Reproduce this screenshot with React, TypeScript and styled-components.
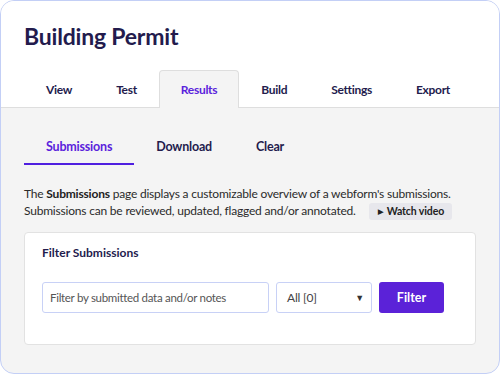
import React from "react";
import styled, { createGlobalStyle } from "styled-components";

const Global = createGlobalStyle`
  html, body { margin: 0; padding: 0; background: #ffffff; }
  body { font-family: "Lato", "Noto Sans", sans-serif; }
  * { box-sizing: border-box; }
`;

const Frame = styled.div`
  width: 500px;
  height: 374px;
  border: 1px solid #c3cff6;
  border-radius: 14px;
  overflow: hidden;
  background: #f4f4f4;
  display: flex;
  flex-direction: column;
`;

const Header = styled.header`
  background: #ffffff;
  padding: 20px 23px 0 23px;
  border-bottom: 1px solid #dedede;
`;

const Title = styled.h1`
  margin: 0;
  font-size: 23px;
  line-height: 30px;
  font-weight: 700;
  color: #231b4d;
  letter-spacing: -0.2px;
`;

const TabList = styled.nav`
  display: flex;
  margin-top: 19px;
`;

const Tab = styled.div<{ $active?: boolean }>`
  height: 38px;
  padding: 0 21px;
  display: flex;
  align-items: center;
  font-size: 12px;
  letter-spacing: -0.3px;
  font-weight: 700;
  color: ${(p) => (p.$active ? "#5a22dc" : "#231b4d")};
  background: ${(p) => (p.$active ? "#f4f4f4" : "transparent")};
  border: 1px solid ${(p) => (p.$active ? "#dedede" : "transparent")};
  border-bottom: none;
  border-radius: 4px 4px 0 0;
  margin-bottom: -1px;
`;

const Body = styled.main`
  padding: 0 23px;
  display: flex;
  flex-direction: column;
`;

const SubTabs = styled.nav`
  display: flex;
  margin-top: 19px;
`;

const SubTab = styled.div<{ $active?: boolean }>`
  height: 38px;
  padding: 2px 22px 0 22px;
  display: flex;
  align-items: center;
  font-size: 12.5px;
  letter-spacing: -0.2px;
  font-weight: 700;
  color: ${(p) => (p.$active ? "#5a22dc" : "#231b4d")};
  border-bottom: 2px solid ${(p) => (p.$active ? "#4f1fe0" : "transparent")};
`;

const Text = styled.p`
  margin: 20px 0 0 0;
  font-size: 12px;
  letter-spacing: -0.2px;
  line-height: 17px;
  color: #2b2b2b;
  b { font-weight: 700; color: #222; }
`;

const WatchButton = styled.span`
  display: inline-block;
  white-space: nowrap;
  margin-left: 13px;
  padding: 0 8px 0 9px;
  background: #e7e7ec;
  border-radius: 3px;
  font-size: 10.5px;
  letter-spacing: -0.1px;
  font-weight: 700;
  color: #222;
  line-height: 17px;
`;

const Play = styled.span`
  font-size: 7px;
  margin-right: 4px;
  vertical-align: 1px;
`;

const Card = styled.section`
  margin-top: 12px;
  background: #ffffff;
  border: 1px solid #e2e2e2;
  border-radius: 4px;
  padding: 12px 17px 0 17px;
  height: 113px;
`;

const CardTitle = styled.h2`
  margin: 0;
  font-size: 12px;
  line-height: 16px;
  font-weight: 700;
  color: #231b4d;
`;

const FilterRow = styled.div`
  display: flex;
  gap: 7px;
  margin-top: 21px;
`;

const Input = styled.div`
  width: 227px;
  height: 31px;
  border: 1px solid #c8d1f6;
  border-radius: 3px;
  padding: 0 7px;
  display: flex;
  align-items: center;
  font-size: 11.5px;
  letter-spacing: -0.3px;
  color: #555;
`;

const Select = styled.div`
  width: 96px;
  height: 31px;
  border: 1px solid #c8d1f6;
  border-radius: 3px;
  padding: 0 7px 0 10px;
  display: flex;
  align-items: center;
  justify-content: space-between;
  font-size: 12px;
  letter-spacing: -0.2px;
  color: #444;
`;

const Caret = styled.span`
  font-size: 9px;
  color: #333;
`;

const FilterButton = styled.button`
  width: 65px;
  height: 31px;
  border: none;
  border-radius: 3px;
  background: #5b22d8;
  color: #ffffff;
  font-family: inherit;
  font-size: 12.5px;
  font-weight: 700;
`;

export default function App() {
  const tabs = ["View", "Test", "Results", "Build", "Settings", "Export"];
  const subTabs = ["Submissions", "Download", "Clear"];
  return (
    <>
      <Global />
      <Frame>
        <Header>
          <Title>Building Permit</Title>
          <TabList>
            {tabs.map((t) => (
              <Tab key={t} $active={t === "Results"}>
                {t}
              </Tab>
            ))}
          </TabList>
        </Header>
        <Body>
          <SubTabs>
            {subTabs.map((t) => (
              <SubTab key={t} $active={t === "Submissions"}>
                {t}
              </SubTab>
            ))}
          </SubTabs>
          <Text>
            The <b>Submissions</b> page displays a customizable overview of a webform's submissions.
            <br />
            Submissions can be reviewed, updated, flagged and/or annotated.
            <WatchButton>
              <Play>▶</Play>Watch video
            </WatchButton>
          </Text>
          <Card>
            <CardTitle>Filter Submissions</CardTitle>
            <FilterRow>
              <Input>Filter by submitted data and/or notes</Input>
              <Select>
                All [0]
                <Caret>▼</Caret>
              </Select>
              <FilterButton>Filter</FilterButton>
            </FilterRow>
          </Card>
        </Body>
      </Frame>
    </>
  );
}
